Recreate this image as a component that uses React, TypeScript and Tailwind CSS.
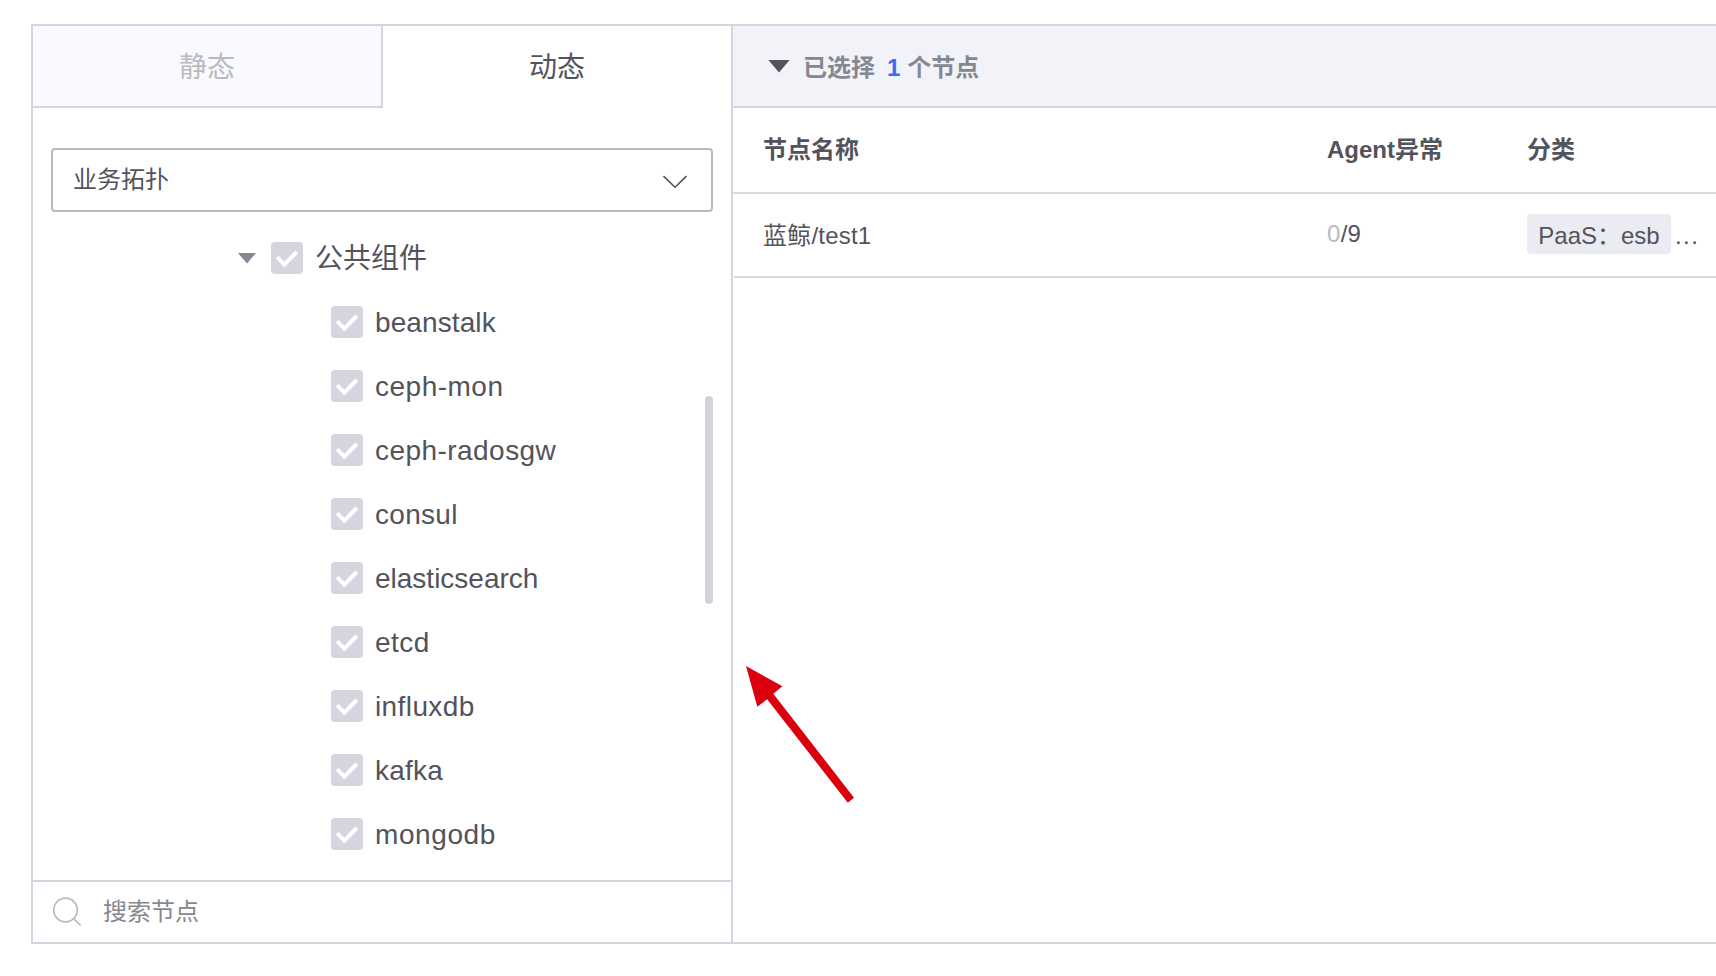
const components = [
  { name: 'beanstalk', tracking: 'tracking-[0.1px]' },
  { name: 'ceph-mon', tracking: 'tracking-[0.5px]' },
  { name: 'ceph-radosgw', tracking: 'tracking-[0.45px]' },
  { name: 'consul', tracking: 'tracking-[0.3px]' },
  { name: 'elasticsearch', tracking: 'tracking-[0px]' },
  { name: 'etcd', tracking: 'tracking-[0.5px]' },
  { name: 'influxdb', tracking: 'tracking-[0.4px]' },
  { name: 'kafka', tracking: 'tracking-[0.2px]' },
  { name: 'mongodb', tracking: 'tracking-[0.6px]' },
];

function CheckBox() {
  return (
    <span className="block size-8 shrink-0 rounded-[4px] bg-[#d5d5df]">
      <svg viewBox="0 0 32 32" className="size-8" fill="none" stroke="#fff" strokeWidth="4">
        <path d="M6.2 15.2 13.3 22.6 25.7 10" />
      </svg>
    </span>
  );
}

function Tabs() {
  return (
    <div className="flex h-[82px] shrink-0 text-[28px] leading-[42px]">
      <div className="flex w-[350px] justify-center border-r-2 border-b-2 border-[#d5d5df] bg-[#f9faff] pt-[21px] text-[#b9bac1]">
        静态
      </div>
      <div className="flex flex-1 justify-center pt-[21px]">动态</div>
    </div>
  );
}

function TopologySelect() {
  return (
    <div className="mx-[18px] mt-10 flex h-16 shrink-0 items-center justify-between rounded-[4px] border-2 border-[#b8b8c2] pr-6 pl-5 text-2xl">
      <span>业务拓扑</span>
      <svg width="24" height="14" viewBox="0 0 24 14" fill="none" stroke="#51515b" strokeWidth="1.6" className="mt-1">
        <path d="M.5 1 12 12.2 23.5 1" />
      </svg>
    </div>
  );
}

function Tree() {
  return (
    <div className="relative flex-1 pt-[14px] text-[28px]">
      <div className="flex h-16 items-center pl-[205px]">
        <svg width="18" height="11" viewBox="0 0 18 11" className="mr-[15px]" fill="#848891">
          <path d="M0 0H18L9 10.6Z" />
        </svg>
        <CheckBox />
        <span className="ml-3 pt-[2px]">公共组件</span>
      </div>
      {components.map(({ name, tracking }) => (
        <div key={name} className="flex h-16 items-center pl-[298px]">
          <CheckBox />
          <span className={`ml-3 pt-[2px] ${tracking}`}>{name}</span>
        </div>
      ))}
      <div className="absolute top-[184px] right-[18px] h-[208px] w-2 rounded-full bg-[#d3d3dc]" />
    </div>
  );
}

function SearchBar() {
  return (
    <div className="flex h-[62px] shrink-0 items-center border-t-2 border-[#d5d5df] pl-5 text-2xl text-[#858891]">
      <svg width="30" height="30" viewBox="0 0 30 30" fill="none" stroke="#b9bac2" strokeWidth="1.7">
        <circle cx="12.5" cy="13" r="11.8" />
        <path d="M20.3 21.4 27.6 28.4" />
      </svg>
      <span className="ml-5">搜索节点</span>
    </div>
  );
}

function SelectedNodes() {
  return (
    <div className="flex-1">
      <div className="flex h-[82px] items-center border-b-2 border-[#d5d5df] bg-[#f2f3f9] pl-[35px] text-2xl font-bold text-[#858891]">
        <svg width="22" height="13" viewBox="0 0 22 13" className="mr-[13px]" fill="#53535e">
          <path d="M.4 0H21.6L11 12.6Z" />
        </svg>
        <div className="flex pt-1">
          <span>已选择</span>
          <span className="mr-[7px] ml-[12px] text-[#3a6df0]">1</span>
          <span>个节点</span>
        </div>
      </div>
      <div className="grid h-[86px] grid-cols-[564px_200px_1fr] items-center border-b-2 border-[#d9d9e1] pl-[30px] text-2xl font-bold">
        <span>节点名称</span>
        <span>Agent异常</span>
        <span>分类</span>
      </div>
      <div className="ml-px grid h-[84px] grid-cols-[564px_200px_1fr] items-center border-b-2 border-[#d9d9e1] pl-[29px] text-2xl">
        <span className="pt-[2px] tracking-[0.2px]">蓝鲸/test1</span>
        <span className="pb-[2px] tracking-[0.3px]">
          <span className="text-[#b9bac2]">0</span>/9
        </span>
        <div className="flex items-center pb-[2px] whitespace-nowrap">
          <span className="flex h-10 w-36 items-center justify-center rounded-[4px] bg-[#ebecf1] pt-[3px]">PaaS：esb</span>
          <span className="ml-1 pt-[3px] tracking-[1.4px]">...</span>
        </div>
      </div>
    </div>
  );
}

export default function App() {
  return (
    <div className="h-[976px] w-[1716px] overflow-hidden bg-white pt-6 pl-[31px] font-['Liberation_Sans','Noto_Sans_CJK_SC',sans-serif] text-[#53535d]">
      <div className="relative flex h-[920px] border-y-2 border-l-2 border-[#d5d5df]">
        <div className="flex w-[700px] flex-col border-r-2 border-[#d5d5df]">
          <Tabs />
          <TopologySelect />
          <Tree />
          <SearchBar />
        </div>
        <SelectedNodes />
        <svg width="110" height="140" viewBox="0 0 110 140" className="absolute top-[639px] left-[712px]" fill="#dc000f">
          <path d="M1 1 37.4 21.3 28.3 28.7 109 132.7 102.8 137.7 22.1 34.3 12.3 41.7Z" />
        </svg>
      </div>
    </div>
  );
}
